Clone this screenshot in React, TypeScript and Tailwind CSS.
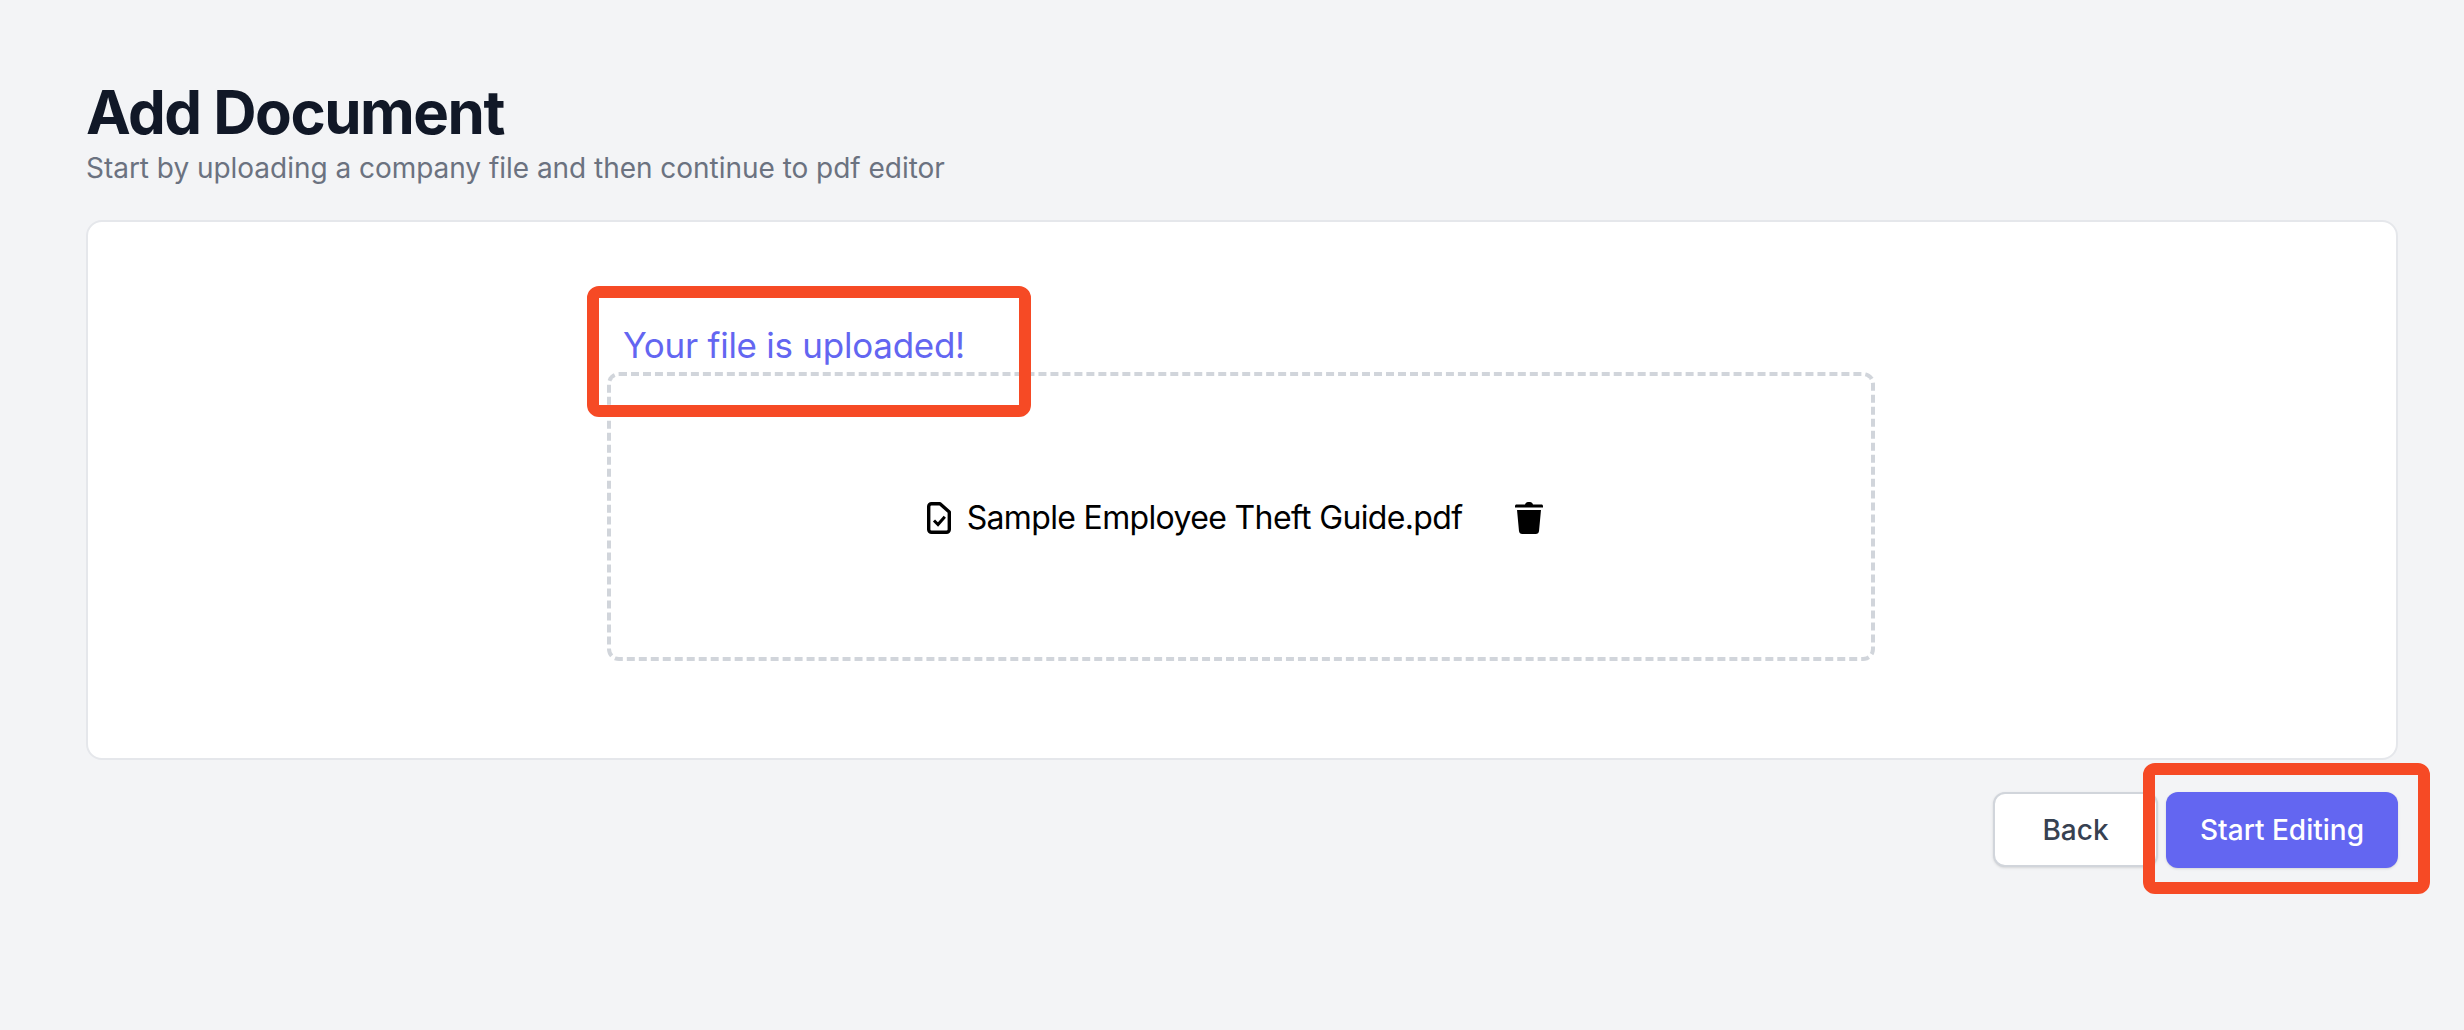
export default function App() {
  return (
    <div className="relative h-[1030px] overflow-hidden bg-[#f3f4f6] pt-[76px] pr-[66px] pl-[86px] font-['Inter',sans-serif]">
      <h1 className="text-[60px] leading-[72px] font-bold tracking-[-1.5px] text-[#111827]">Add Document</h1>
      <p className="text-[28px] leading-[40px] tracking-[-0.03px] text-[#6b7280]">
        Start by uploading a company file and then continue to pdf editor
      </p>

      <div className="mt-[32px] flex h-[540px] justify-center rounded-2xl border-2 border-[#e5e7eb] bg-white pt-[97px] pr-[2px]">
        <div className="w-[1268px]">
          <h2 className="pl-4 text-[35px] leading-[52px] tracking-[-0.26px] text-[#6366f1]">Your file is uploaded!</h2>
          <div className="mt-[1px] flex h-[289px] items-start justify-center rounded-xl border-4 border-dashed border-[#d1d5db] pt-[122px] pr-[12px]">
            <div className="flex items-center">
              <svg width="24" height="32" viewBox="0 0 24 32" fill="none" stroke="black" strokeWidth="3.400" className="mr-[16px]">
                <path d="M4.500 1.700h8.500l9.300 8.300V27.500a2.800 2.800 0 0 1-2.800 2.800H4.500a2.800 2.800 0 0 1-2.800-2.800V4.500a2.800 2.800 0 0 1 2.800-2.800z" strokeLinejoin="round" />
                <path d="M7 18.500l4 4 6.800-7.800" strokeWidth="3" />
              </svg>
              <span className="text-[32px] leading-[40px] tracking-[-0.65px] text-black">Sample Employee Theft Guide.pdf</span>
              <svg width="28" height="32" viewBox="0 0 28 32" fill="black" className="ml-[53px]">
                <path d="M10 2.500C10.500 1 11.500 0 13 0h2c1.500 0 2.500 1 3 2.500h8.500c.8 0 1.500.7 1.500 1.500v1.500H0V4c0-.8.7-1.500 1.500-1.500z" />
                <path d="M2 8h24l-2 21c-.2 1.700-1.400 3-3.200 3H7.200c-1.800 0-3-1.300-3.200-3z" />
              </svg>
            </div>
          </div>
        </div>
      </div>

      <div className="mt-[32px] flex justify-end gap-2">
        <button className="h-[75px] w-[165px] rounded-xl border-2 border-[#d1d5db] bg-white text-[28px] font-medium text-[#374151] shadow-sm">
          Back
        </button>
        <button className="h-[76px] w-[232px] rounded-xl bg-[#6366f1] text-[28px] font-medium text-white shadow-sm">
          Start Editing
        </button>
      </div>

      {/* red annotation boxes */}
      <div className="absolute top-[286px] left-[587px] h-[131px] w-[444px] rounded-xl border-[12px] border-[#f64a25]" />
      <div className="absolute top-[763px] left-[2143px] h-[131px] w-[287px] rounded-xl border-[12px] border-[#f64a25]" />
    </div>
  );
}
